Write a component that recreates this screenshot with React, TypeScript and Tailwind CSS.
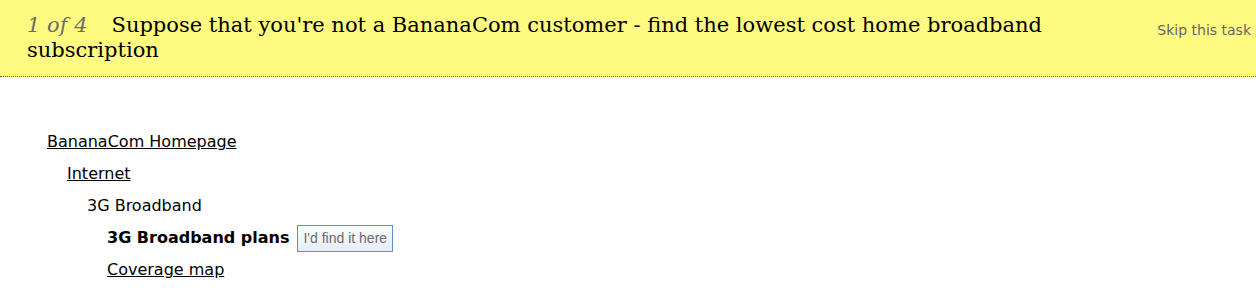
import React from 'react';

const tree = [
  { label: 'BananaCom Homepage', depth: 0, kind: 'link' },
  { label: 'Internet', depth: 1, kind: 'link' },
  { label: '3G Broadband', depth: 2, kind: 'plain' },
  { label: '3G Broadband plans', depth: 3, kind: 'current' },
  { label: 'Coverage map', depth: 3, kind: 'link' },
];

const indent = ['pl-0', 'pl-[20px]', 'pl-[40px]', 'pl-[60px]'];

export default function App() {
  return (
    <div className="w-[1256px] h-[289px] bg-white overflow-hidden">
      <header className="flex h-[77px] bg-[#fffb80] border-b border-dotted border-[#555] pl-[27px] pr-[5px] pt-[13px]">
        <h1 className="w-[1100px] font-['DejaVu_Serif',serif] text-[21px] leading-[25px] text-black">
          <span className="italic text-[#6b6b6b] mr-[24px]">1 of 4</span>
          Suppose that you're not a BananaCom customer - find the lowest cost home broadband subscription
        </h1>
        <a className="ml-auto pt-[7px] font-['DejaVu_Sans',sans-serif] text-[14px] text-[#666] cursor-pointer">
          Skip this task
        </a>
      </header>
      <ul className="pl-[47px] pt-[49px] font-['DejaVu_Sans',sans-serif] text-[16px] text-black">
        {tree.map((item) => (
          <li key={item.label} className={`flex items-center h-[32px] ${indent[item.depth]}`}>
            {item.kind === 'link' && <a className="underline cursor-pointer">{item.label}</a>}
            {item.kind === 'plain' && <span>{item.label}</span>}
            {item.kind === 'current' && (
              <>
                <strong className="font-bold">{item.label}</strong>
                <button className="ml-[8px] h-[27px] px-[5px] border border-[#5b8fd1] bg-gradient-to-b from-white to-[#e6ebf5] font-['Liberation_Sans',sans-serif] text-[14px] text-[#6b6b6b]">
                  I'd find it here
                </button>
              </>
            )}
          </li>
        ))}
      </ul>
    </div>
  );
}
